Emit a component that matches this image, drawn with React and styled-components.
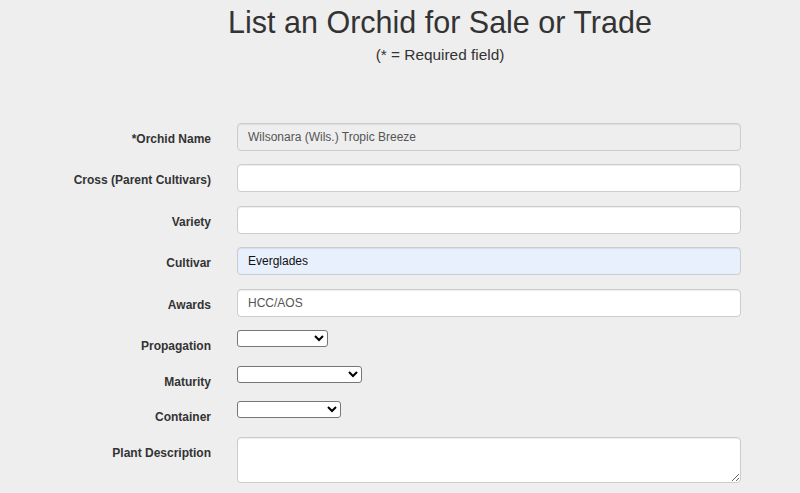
import React from "react";
import styled, { createGlobalStyle } from "styled-components";

const GlobalStyle = createGlobalStyle`
    html, body {
        margin: 0;
        padding: 0;
        background: #eeeeee;
        font-family: "Liberation Sans", Arial, sans-serif;
        color: #333;
    }
`;

const Page = styled.div`
    width: 800px;
    height: 493px;
    overflow: hidden;
    box-sizing: border-box;
    padding-top: 6px;
`;

const Header = styled.div`
    margin-left: 80px;
    text-align: center;
`;

const Title = styled.h1`
    margin: 0;
    font-size: 30.5px;
    font-weight: normal;
    line-height: 1.1;
    color: #333;
`;

const Subtitle = styled.p`
    margin: 6px 0 0 0;
    font-size: 15.4px;
    line-height: 18px;
    color: #333;
`;

const Form = styled.form`
    margin-top: 59px;
    display: flex;
    flex-direction: column;
    gap: 13.5px;
`;

const Group = styled.div`
    display: grid;
    grid-template-columns: 211px 504px;
    column-gap: 26px;
    align-items: start;
`;

const Label = styled.label`
    text-align: right;
    font-size: 12px;
    font-weight: bold;
    line-height: 12px;
    padding-top: 10px;
    color: #333;
`;

const TextInput = styled.input`
    box-sizing: border-box;
    width: 504px;
    height: 28px;
    padding: 0 10px;
    font-family: inherit;
    font-size: 12px;
    color: ${({ $dark }) => ($dark ? "#111" : "#555")};
    background: ${({ $bg }) => $bg || "#fff"};
    border: 1px solid #cccccc;
    border-radius: 4px;
    box-shadow: inset 0 1px 1px rgba(0, 0, 0, 0.075);
    outline: none;
    &:disabled {
        background: #eeeeee;
        color: #555;
        opacity: 1;
    }
`;

const Select = styled.select`
    box-sizing: border-box;
    width: ${({ $w }) => $w};
    height: 17px;
    font-family: inherit;
    font-size: 11px;
    background: #fff;
    border: 1px solid #767676;
    border-radius: 3px;
    padding: 0;
`;

const TextArea = styled.textarea`
    box-sizing: border-box;
    width: 504px;
    height: 46px;
    padding: 4px 10px;
    font-family: inherit;
    font-size: 12px;
    color: #555;
    background: #fff;
    border: 1px solid #cccccc;
    border-radius: 4px;
    box-shadow: inset 0 1px 1px rgba(0, 0, 0, 0.075);
    outline: none;
    resize: vertical;
`;

const textFields = [
    { label: "*Orchid Name", value: "Wilsonara (Wils.) Tropic Breeze", disabled: true },
    { label: "Cross (Parent Cultivars)", value: "" },
    { label: "Variety", value: "" },
    { label: "Cultivar", value: "Everglades", bg: "#e8f0fe", dark: true },
    { label: "Awards", value: "HCC/AOS" },
];

const selectFields = [
    { label: "Propagation", width: "91px" },
    { label: "Maturity", width: "125px" },
    { label: "Container", width: "104px" },
];

export default function App() {
    return (
        <Page>
            <GlobalStyle />
            <Header>
                <Title>List an Orchid for Sale or Trade</Title>
                <Subtitle>(* = Required field)</Subtitle>
            </Header>
            <Form>
                {textFields.map((f) => (
                    <Group key={f.label}>
                        <Label>{f.label}</Label>
                        <TextInput
                            defaultValue={f.value}
                            disabled={f.disabled}
                            $bg={f.bg}
                            $dark={f.dark}
                        />
                    </Group>
                ))}
                {selectFields.map((f) => (
                    <Group key={f.label}>
                        <Label>{f.label}</Label>
                        <Select $w={f.width} defaultValue="">
                            <option value=""></option>
                        </Select>
                    </Group>
                ))}
                <Group>
                    <Label>Plant Description</Label>
                    <TextArea />
                </Group>
            </Form>
        </Page>
    );
}
